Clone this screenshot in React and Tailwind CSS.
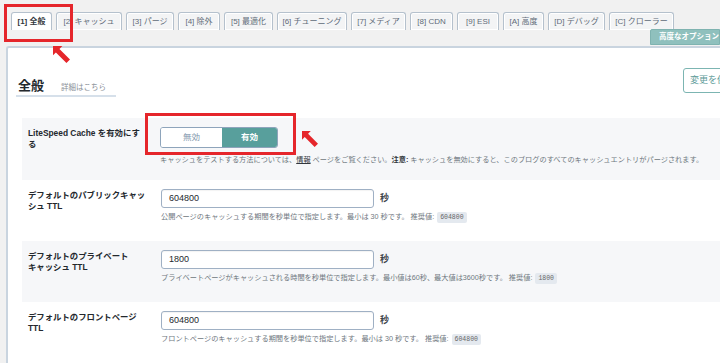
const tabs = [
  { label: '[1] 全般', w: 'w-[41px]', active: true },
  { label: '[2] キャッシュ', w: 'w-[66px]' },
  { label: '[3] パージ', w: 'w-[48px]' },
  { label: '[4] 除外', w: 'w-[42px]' },
  { label: '[5] 最適化', w: 'w-[49px]' },
  { label: '[6] チューニング', w: 'w-[70px]' },
  { label: '[7] メディア', w: 'w-[55px]' },
  { label: '[8] CDN', w: 'w-[43px]' },
  { label: '[9] ESI', w: 'w-[42px]' },
  { label: '[A] 高度', w: 'w-[41px]' },
  { label: '[D] デバッグ', w: 'w-[57px]' },
  { label: '[C] クローラー', w: 'w-[65px]' },
]

function Arrow({ className }) {
  return (
    <svg viewBox="0 0 20 20" className={className}>
      <polygon points="0,0 11,0 7.6,3.4 20,15.8 15.8,20 3.4,7.6 0,11" fill="#e5262b" />
    </svg>
  )
}

function Badge({ children }) {
  return (
    <span className="ml-[3px] inline-block rounded-[2px] bg-[#e4e9ef] px-[3px] font-['Liberation_Mono',monospace] text-[6.5px] leading-[11px] text-[#666]">
      {children}
    </span>
  )
}

function Label({ lines }) {
  return (
    <div className="w-[121px] shrink-0 whitespace-nowrap pt-[10px] text-[8.4px] font-bold leading-[11px] text-[#23282d]">
      {lines.map((l) => (
        <div key={l}>{l}</div>
      ))}
    </div>
  )
}

function TtlRow({ lines, value, gray, children }) {
  return (
    <div className={`flex h-[61px] pl-[6px] ${gray ? 'bg-[#f6f7f9]' : 'bg-white'}`}>
      <Label lines={lines} />
      <div className="ml-[12px] pt-[9px]">
        <div className="flex items-center">
          <div className="flex h-[19px] w-[213px] items-center rounded-[3px] border border-[#9fb0c4] bg-white px-[7px] text-[9px] text-[#23282d] shadow-[inset_0_1px_1px_rgba(0,0,0,0.05)]">
            {value}
          </div>
          <span className="ml-[6px] text-[9px] font-bold text-[#3c434a]">秒</span>
        </div>
        <p className="mt-[3px] text-[7.2px] leading-[11px] text-[#6f7780]">{children}</p>
      </div>
    </div>
  )
}

export default function App() {
  return (
    <div className="relative h-[363px] w-[720px] overflow-hidden bg-[#f1f1f1] font-['Liberation_Sans','Noto_Sans_CJK_JP',sans-serif]">
      <div className="flex gap-[4px] pl-[11px] pt-[12px]">
        {tabs.map((t) => (
          <div
            key={t.label}
            className={`flex h-[18px] shrink-0 items-center justify-center whitespace-nowrap rounded-t-[3px] border border-b-0 border-[#b5c1cd] text-[8px] shadow-[inset_0_0_0_1px_#ffffff] ${t.w} ${
              t.active ? 'bg-white font-bold text-[#32373c]' : 'bg-[#f3f4f5] text-[#5f6b78]'
            }`}
          >
            {t.label}
          </div>
        ))}
      </div>
      <div className="flex h-[16px] justify-end">
        <div className="-mt-[1px] flex h-[16px] w-[70px] items-center rounded-tl-[2px] border border-[#7fb3b0] bg-[#8fc0bd] pl-[8px] text-[7.5px] font-bold whitespace-nowrap text-white">
          高度なオプション
        </div>
      </div>
      <div className="ml-[6px] h-[320px] w-[740px] rounded-tl-[3px] border-l-2 border-t-2 border-[#c9d4df] bg-white pl-[8px]">
        <div className="flex pt-[20px]">
          <div className="w-[667px] shrink-0 pt-[10px]">
            <div className="flex w-[100px] items-baseline border-b-2 border-[#d6e0ea] pb-[1px] pl-[2px]">
              <span className="text-[13px] font-bold leading-[16px] text-[#23282d]">全般</span>
              <span className="ml-[17px] text-[7.5px] text-[#8a9097]">詳細はこちら</span>
            </div>
          </div>
          <div className="flex h-[25px] items-center rounded-[3px] border-[1.5px] border-[#7cb5b2] bg-white px-[6px] text-[9px] whitespace-nowrap text-[#5c9a98]">
            変更を保存
          </div>
        </div>

        <div className="ml-[6px] mt-[21px]">
          <div className="flex h-[62px] bg-[#f6f7f9] pl-[6px]">
            <Label lines={['LiteSpeed Cache を有効にす', 'る']} />
            <div className="ml-[11px] pt-[9px]">
              <div className="flex h-[21px] w-[118px] overflow-hidden rounded-[3px] border border-[#8ea4bb] text-[8.5px]">
                <div className="flex w-[61px] items-center justify-center bg-white text-[#8397ad]">無効</div>
                <div className="flex flex-1 items-center justify-center bg-[#589f9c] font-bold text-white">有効</div>
              </div>
              <p className="mt-[6px] whitespace-nowrap text-[7.2px] leading-[11px] text-[#6f7780]">
                キャッシュをテストする方法については、<span className="text-[#32373c] underline">情報</span> ページをご覧ください。
                <span className="font-bold text-[#32373c]">注意:</span> キャッシュを無効にすると、このブログのすべてのキャッシュエントリがパージされます。
              </p>
            </div>
          </div>
          <TtlRow lines={['デフォルトのパブリックキャッ', 'シュ TTL']} value="604800">
            公開ページのキャッシュする期間を秒単位で指定します。最小は 30 秒です。 推奨値:<Badge>604800</Badge>
          </TtlRow>
          <TtlRow lines={['デフォルトのプライベート', 'キャッシュ TTL']} value="1800" gray>
            プライベートページがキャッシュされる時間を秒単位で指定します。最小値は60秒、最大値は3600秒です。 推奨値:<Badge>1800</Badge>
          </TtlRow>
          <TtlRow lines={['デフォルトのフロントページ', 'TTL']} value="604800">
            フロントページのキャッシュする期間を秒単位で指定します。最小は 30 秒です。 推奨値:<Badge>604800</Badge>
          </TtlRow>
          <div className="h-[20px] bg-[#f6f7f9]" />
        </div>
      </div>

      <div className="absolute left-[4px] top-[4px] h-[38px] w-[69px] border-[3px] border-[#e5262b]" />
      <Arrow className="absolute left-[53px] top-[46px] h-[17px] w-[17px]" />
      <div className="absolute left-[145px] top-[113px] h-[42px] w-[151px] border-[3px] border-[#e5262b]" />
      <Arrow className="absolute left-[302px] top-[131px] h-[16px] w-[16px]" />
    </div>
  )
}
